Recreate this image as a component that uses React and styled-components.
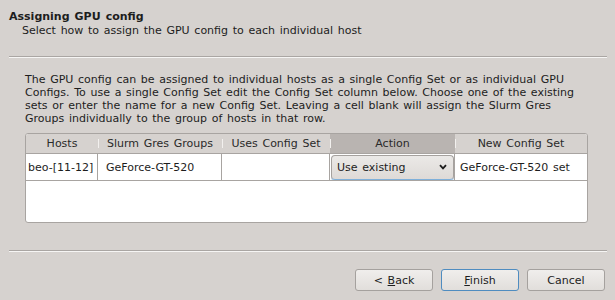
import styled, { createGlobalStyle } from 'styled-components';

const GlobalStyle = createGlobalStyle`
  html, body {
    margin: 0;
    padding: 0;
    background: #d6d2cf;
  }
  body {
    font-family: "DejaVu Sans", "Liberation Sans", sans-serif;
    font-size: 11px;
    word-spacing: 1.2px;
    color: #1d1d1d;
  }
`;

const columns = [
  { title: 'Hosts', width: 72 },
  { title: 'Slurm Gres Groups', width: 124 },
  { title: 'Uses Config Set', width: 108 },
  { title: 'Action', width: 125, active: true },
  { title: 'New Config Set', width: 132 },
];

const App = () => {
  const grid = columns.map((c) => `${c.width}px`).join(' ');

  return (
    <Wizard>
      <GlobalStyle />
      <Header>
        <Title>Assigning GPU config</Title>
        <Subtitle>Select how to assign the GPU config to each individual host</Subtitle>
      </Header>
      <Separator $top={18} />

      <Content>
        <Description>
          The GPU config can be assigned to individual hosts as a single Config Set or as
          individual GPU Configs. To use a single Config Set edit the Config Set column below.
          Choose one of the existing sets or enter the name for a new Config Set. Leaving a cell
          blank will assign the Slurm Gres Groups individually to the group of hosts in that row.
        </Description>

        <Table>
          <HeaderRow $grid={grid}>
            {columns.map((c, i) => (
              <HeaderCell key={c.title} $active={c.active} $first={i === 0}>
                {c.title}
              </HeaderCell>
            ))}
          </HeaderRow>
          <Row $grid={grid}>
            <Cell $pad={2}>beo-[11-12]</Cell>
            <Cell $pad={8}>GeForce-GT-520</Cell>
            <Cell />
            <Cell $pad={0}>
              <Combo>
                <span>Use existing</span>
                <svg width="8" height="6" viewBox="0 0 8 6">
                  <path d="M1 1.2 L4 4.4 L7 1.2" fill="none" stroke="#1d1d1d" strokeWidth="1.8" />
                </svg>
              </Combo>
            </Cell>
            <Cell $pad={5} $last>GeForce-GT-520 set</Cell>
          </Row>
        </Table>
      </Content>

      <Separator $top={27} />

      <ButtonRow>
        <Button>
          &lt; <u>B</u>ack
        </Button>
        <Button $default>
          <u>F</u>inish
        </Button>
        <Button>Cancel</Button>
      </ButtonRow>
    </Wizard>
  );
};

const Wizard = styled.div`
  width: 615px;
  height: 300px;
  background: #d6d2cf;
  display: flex;
  flex-direction: column;
  overflow: hidden;
`;

const Header = styled.div`
  padding: 10px 9px 0 9px;
  line-height: 14px;
`;

const Title = styled.div`
  font-weight: bold;
`;

const Subtitle = styled.div`
  padding-left: 13px;
`;

const Separator = styled.div`
  margin: ${(p) => p.$top}px 8px 0 9px;
  border-top: 1px solid #aaa6a3;
  border-bottom: 1px solid #f6f5f4;
`;

const Content = styled.div`
  padding: 0 27px 0 25px;
`;

const Description = styled.p`
  margin: 15px 0 0;
  line-height: 13px;
`;

const Table = styled.div`
  margin-top: 8px;
  height: 88px;
  border: 1px solid #a8a4a1;
  border-radius: 3px;
  background: #fff;
  overflow: hidden;
`;

const HeaderRow = styled.div`
  display: grid;
  grid-template-columns: ${(p) => p.$grid};
  height: 19px;
  background: #d6d2cf;
  border-bottom: 1px solid #a8a4a1;
`;

const HeaderCell = styled.div`
  position: relative;
  display: flex;
  align-items: center;
  justify-content: center;
  background: ${(p) => (p.$active ? '#b9b4b1' : 'transparent')};
  color: #2a2a2a;

  &::before {
    content: '';
    display: ${(p) => (p.$first ? 'none' : 'block')};
    position: absolute;
    left: 0;
    top: 5px;
    height: 9px;
    width: 1px;
    background: #f2f0ee;
  }
`;

const Row = styled.div`
  display: grid;
  grid-template-columns: ${(p) => p.$grid};
  height: 26px;
  border-bottom: 1px solid #a8a4a1;
`;

const Cell = styled.div`
  display: flex;
  align-items: center;
  padding-left: ${(p) => (p.$pad ?? 6)}px;
  border-right: ${(p) => (p.$last ? 'none' : '1px solid #a8a4a1')};
  white-space: nowrap;
  overflow: hidden;
`;

const Combo = styled.div`
  box-sizing: border-box;
  width: 123px;
  height: 25px;
  margin-left: 1px;
  display: flex;
  align-items: center;
  justify-content: space-between;
  padding: 0 6px 0 5px;
  border: 1px solid #a5a19e;
  border-bottom-color: #7fb0da;
  border-radius: 4px;
  background: linear-gradient(#ebe9e7, #dedad7);
  box-shadow: 0 1px 0 #a9cbea;
`;

const ButtonRow = styled.div`
  margin-top: 17px;
  padding-right: 10px;
  display: flex;
  justify-content: flex-end;
  gap: 8px;
`;

const Button = styled.button`
  box-sizing: border-box;
  width: 78px;
  height: 22px;
  font-family: "DejaVu Sans", "Liberation Sans", sans-serif;
  font-size: 11px;
  word-spacing: 1.2px;
  color: #1d1d1d;
  border: 1px solid ${(p) => (p.$default ? '#4f8cc0' : '#a5a19e')};
  border-radius: 3px;
  background: linear-gradient(#f0eeec, #e1dedb);
  padding: 0;
`;

export default App;
